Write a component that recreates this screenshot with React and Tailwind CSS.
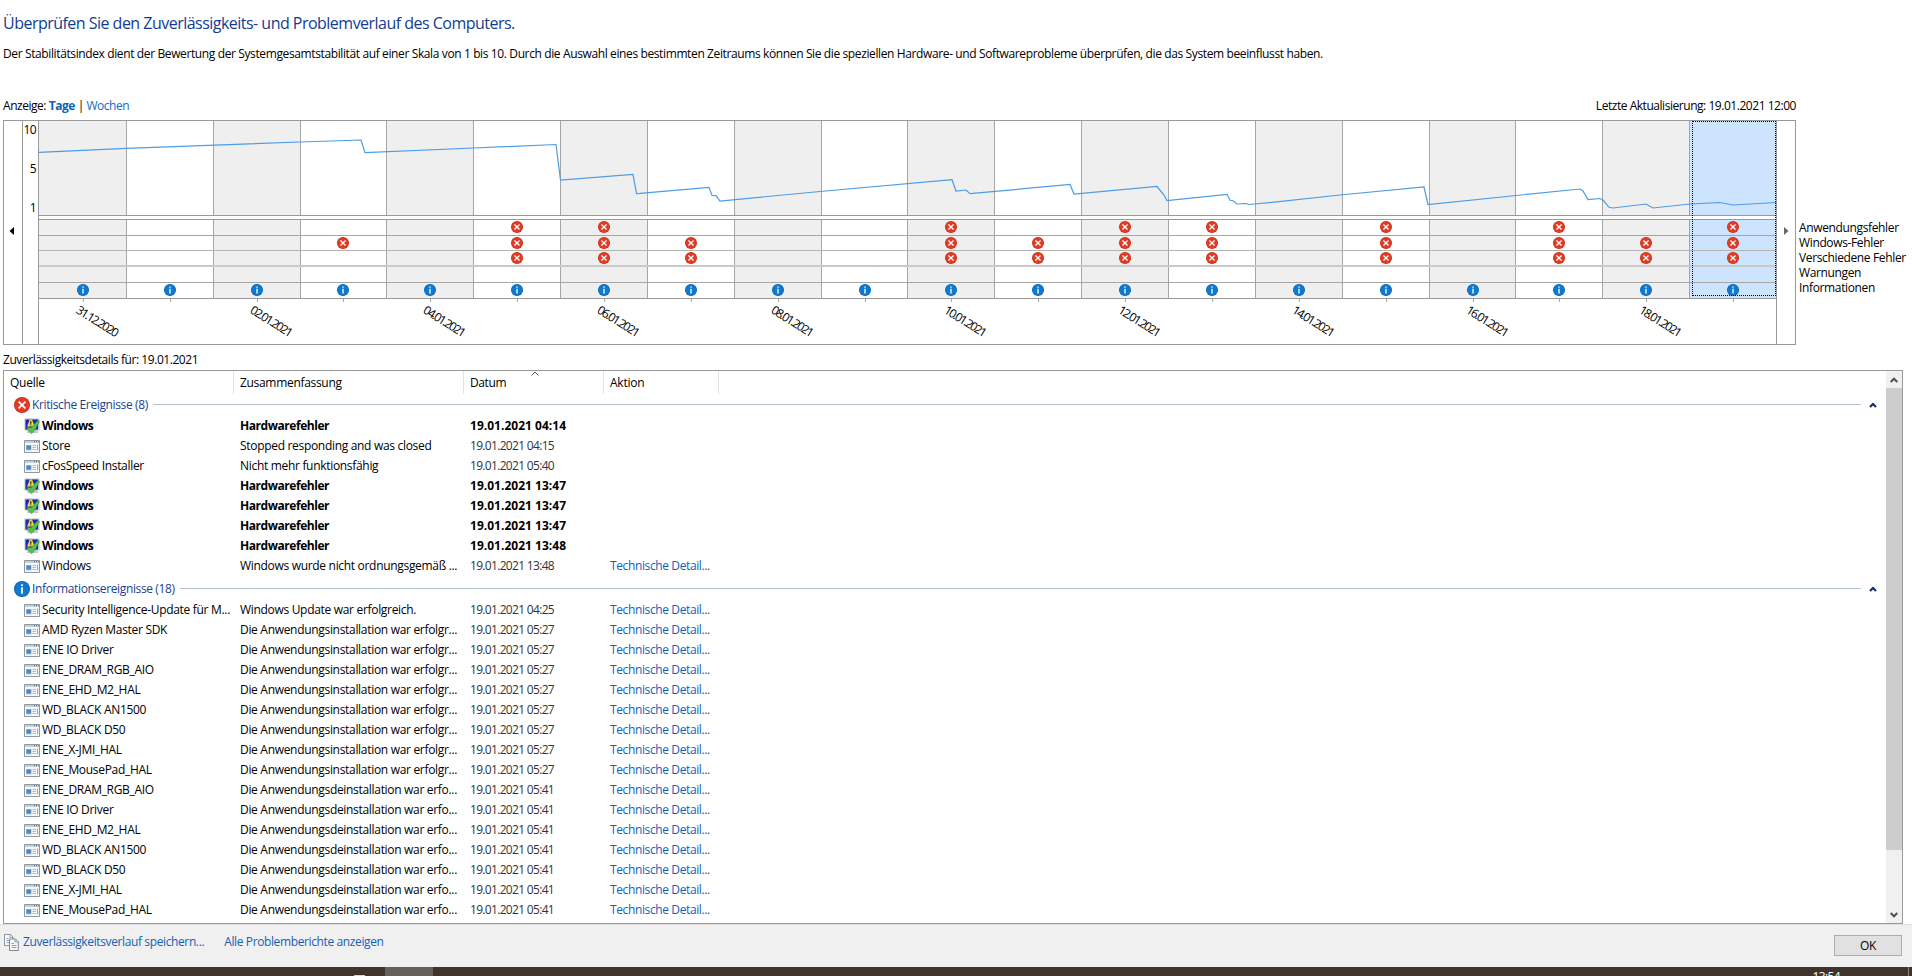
import React from "react";

const columns = Array.from({ length: 20 }, (_, i) => i);
const rowNames = ["Anwendungsfehler", "Windows-Fehler", "Verschiedene Fehler", "Warnungen", "Informationen"];

// day indexes with an event, one list per row of the chart
const events = [
  [5, 6, 10, 12, 13, 15, 17, 19],
  [3, 5, 6, 7, 10, 11, 12, 13, 15, 17, 18, 19],
  [5, 6, 7, 10, 11, 12, 13, 15, 17, 18, 19],
  [],
  columns,
];

const rowStyles = [
  "h-[16px] border-b border-[#a6a6a6]",
  "h-[15px] border-b border-[#b4b4b4]",
  "h-[16px] border-b-2 border-[#c9c9c9]",
  "h-[16px] border-b border-[#a6a6a6]",
  "h-[16px] border-b border-[#999]",
];

const dates = [
  "31.12.2020",
  "02.01.2021",
  "04.01.2021",
  "06.01.2021",
  "08.01.2021",
  "10.01.2021",
  "12.01.2021",
  "14.01.2021",
  "16.01.2021",
  "18.01.2021",
];

const critical = [
  ["Windows", "Hardwarefehler", "04:14", true],
  ["Store", "Stopped responding and was closed", "04:15"],
  ["cFosSpeed Installer", "Nicht mehr funktionsfähig", "05:40"],
  ["Windows", "Hardwarefehler", "13:47", true],
  ["Windows", "Hardwarefehler", "13:47", true],
  ["Windows", "Hardwarefehler", "13:47", true],
  ["Windows", "Hardwarefehler", "13:48", true],
  ["Windows", "Windows wurde nicht ordnungsgemäß ...", "13:48", false, true],
];

const installed = "Die Anwendungsinstallation war erfolgr...";
const removed = "Die Anwendungsdeinstallation war erfo...";

const infos = [
  ["Security Intelligence-Update für M...", "Windows Update war erfolgreich.", "04:25"],
  ["AMD Ryzen Master SDK", installed, "05:27"],
  ["ENE IO Driver", installed, "05:27"],
  ["ENE_DRAM_RGB_AIO", installed, "05:27"],
  ["ENE_EHD_M2_HAL", installed, "05:27"],
  ["WD_BLACK AN1500", installed, "05:27"],
  ["WD_BLACK D50", installed, "05:27"],
  ["ENE_X-JMI_HAL", installed, "05:27"],
  ["ENE_MousePad_HAL", installed, "05:27"],
  ["ENE_DRAM_RGB_AIO", removed, "05:41"],
  ["ENE IO Driver", removed, "05:41"],
  ["ENE_EHD_M2_HAL", removed, "05:41"],
  ["WD_BLACK AN1500", removed, "05:41"],
  ["WD_BLACK D50", removed, "05:41"],
  ["ENE_X-JMI_HAL", removed, "05:41"],
  ["ENE_MousePad_HAL", removed, "05:41"],
].map(([a, b, c]) => [a, b, c, false, true]);

const ErrorIcon = ({ className }) => (
  <svg viewBox="0 0 16 16" className={className}>
    <circle cx="8" cy="8" r="8" fill="#c9301a" />
    <circle cx="8" cy="8" r="7.2" fill="#e03b24" />
    <path d="M4.600 4.600l6.800 6.800M11.400 4.600l-6.800 6.800" stroke="#fff" strokeWidth="1.7" />
  </svg>
);

const InfoIcon = ({ className }) => (
  <svg viewBox="0 0 16 16" className={className}>
    <circle cx="8" cy="8" r="8" fill="#0b63ae" />
    <circle cx="8" cy="8" r="7.2" fill="#0f78d0" />
    <path d="M8 3.200v1.900M8 6.300v6.500" stroke="#fff" strokeWidth="1.8" />
  </svg>
);

const MonitorIcon = () => (
  <svg viewBox="0 0 16 16" className="w-4 h-4 shrink-0">
    <path d="M4 12h9l1.500 3H3z" fill="#c3c8cf" />
    <path d="M0.500 0.500h15v12h-15z" fill="#b7c1cf" />
    <path d="M1.500 1.500h12.500v10H1.500z" fill="#1a2bb0" />
    <path d="M6.800 1.200c1.400 0 1.800 1 1.900 2.300L11 8.500H3l2-5c.1-1.300.6-2.300 1.800-2.300z" fill="#efd93a" />
    <path d="M6.800 3.200v2.600M6.800 6.600v1" stroke="#222" strokeWidth="1.200" />
    <path d="M3.500 9.200l3.700.6 6.600-7.300 1.700 1-4.300 8L7.500 15.800 3.200 11.500z" fill="#5cbf4c" stroke="#2f8f2c" strokeWidth="0.5" />
  </svg>
);

const AppIcon = () => (
  <svg viewBox="0 0 16 13" className="w-4 h-[13px] shrink-0">
    <path d="M0.500 0.500h15v12h-15z" fill="#f5f7f9" stroke="#8f979f" />
    <path d="M1 1h14v2H1z" fill="#c5d0d9" />
    <path d="M10 1.700h1M12 1.700h1M14 1.700h.8" stroke="#4a5864" strokeWidth="0.9" />
    <path d="M2 5h5.500v5.500H2z" fill="#a9c6df" />
    <path d="M2.500 5.500h4.500v4H2.500z" fill="#5286b6" />
    <path d="M8.500 5.500h3.500M8.500 7.500h3.500M8.500 9.500h3.500" stroke="#9aa9b6" strokeWidth="0.8" />
    <path d="M13.600 4.500v6" stroke="#6da0cf" strokeWidth="0.9" />
  </svg>
);

const CopyIcon = () => (
  <svg viewBox="0 0 15 17" className="w-[15px] h-[17px] shrink-0">
    <path d="M.5.5h6l2.500 2.500v8.500H.5z" fill="#f7f8f9" stroke="#8b959e" />
    <path d="M6 .5v3h3M2.500 4.500h2M2.500 6.500h3M2.500 8.500h3" fill="none" stroke="#93a3b3" />
    <path d="M5.500 5h6l2.800 2.800v8.700H5.500z" fill="#f7f8f9" stroke="#7d8992" />
    <path d="M11 5v3h3M7.500 9.500h2.500M7.500 11.500h5M7.500 13.500h5" fill="none" stroke="#7b9fc4" />
  </svg>
);

const dayColor = (i) => {
  if (i === 19) return "bg-[#cce4fd] border-l";
  if (i === 0) return "bg-[#efefef]";
  return i % 2 ? "bg-white border-l" : "bg-[#efefef] border-l";
};

const Chart = () => (
  <div className="flex w-[1793px] h-[225px] border border-[#999]">
    <div className="w-[19px] border-r border-[#999] flex items-center justify-center pb-[3px] pr-[3px]">
      <svg viewBox="0 0 5 8" className="w-[5px] h-2">
        <path d="M5 0v8L0.500 4z" fill="#000" />
      </svg>
    </div>
    <div className="w-[16px] border-r border-[#999] text-right pr-[2px] text-[12px] leading-[16px] tracking-[-0.6px]">
      <div className="pt-[1px]">10</div>
      <div className="pt-[23px]">5</div>
      <div className="pt-[23px]">1</div>
    </div>
    <div className="relative w-[1738px] border-r border-[#999]">
      <div className="grid grid-cols-20 h-[95px] border-b border-[#999]">
        {columns.map((i) => (
          <div key={i} className={`${dayColor(i)} border-[#a6a6a6]`} />
        ))}
      </div>
      <div className="h-[3px]" />
      <div className="border-t border-[#999]">
        {events.map((list, row) => (
          <div key={row} className={`grid grid-cols-20 ${rowStyles[row]}`}>
            {columns.map((i) => (
              <div key={i} className={`flex items-start justify-center pt-px ${i ? "" : "pl-px"} ${dayColor(i)} border-[#a6a6a6]`}>
                {list.includes(i) &&
                  (row === 4 ? (
                    <InfoIcon className="w-[12px] h-[12px] shrink-0" />
                  ) : (
                    <ErrorIcon className="w-[12px] h-[12px] shrink-0" />
                  ))}
              </div>
            ))}
          </div>
        ))}
      </div>
      <div className="grid grid-cols-20 h-[3px]">
        {columns.map((i) => (
          <div key={i} className="flex justify-center pl-[2px]">
            <div className="w-px h-[3px] bg-[#a6a6a6]" />
          </div>
        ))}
      </div>
      <div className="grid grid-cols-10 pt-[1px]">
        {dates.map((d) => (
          <div key={d} className="pl-[42px]">
            <div className="w-[50px] origin-top-left rotate-[32deg] text-[12px] leading-[14px] tracking-[-1.500px]">{d}</div>
          </div>
        ))}
      </div>

      <svg viewBox="39 121 1737 95" className="absolute left-0 top-0 w-[1737px] h-[95px]">
        <polyline
          fill="none"
          stroke="#4c9ce6"
          strokeWidth="1.2"
          points="39,152.300 126,148.300 300,142 361,140 365,152.700 474,148 556,144.500 560.500,180 633,174.300 636.500,193.500 640,193.300 709,187.300 712,195.500 716,195.700 720,201 820,191.500 952,179.700 956,191 966,190 970,193.700 1070,184.500 1074,194 1157,186.500 1164,195 1167,200.500 1227,194.300 1230,200.300 1233,200.700 1237,204 1246,203.500 1249,204.500 1272,202.300 1340,195 1424,187 1428,204.500 1580,189 1583,191 1588,199.500 1600,198.500 1603,200 1609,207.300 1613,208 1646,204 1653,208 1690,204 1720,202.500 1733,205 1776,202.500"
        />
      </svg>
      <div className="absolute right-0 top-0 w-[84px] h-[175px] border border-dotted border-black" />
    </div>
    <div className="flex-1 flex items-center justify-center pb-[3px]">
      <svg viewBox="0 0 5 8" className="w-[5px] h-2">
        <path d="M0 0v8l4.500-4z" fill="#666" />
      </svg>
    </div>
  </div>
);

const Group = ({ icon, label }) => (
  <div className="flex items-center h-[21px] mb-px pl-[10px]">
    {icon}
    <span className="pl-[2px] pr-[5px] tracking-[-0.37px] text-[#1b3f8f]">{label}</span>
    <div className="flex-1 h-px bg-[#b4bfd3]" />
    <svg viewBox="0 0 8 6" className="w-2 h-[6px] ml-[8px] mr-[9px]">
      <path d="M1 5l3-3 3 3" fill="none" stroke="#10316b" strokeWidth="2.200" />
    </svg>
  </div>
);

const Row = ({ row: [source, summary, time, bold, action] }) => (
  <div className={`flex items-center h-5 ${bold ? "font-bold tracking-[-0.45px]" : "tracking-[-0.31px]"}`}>
    <div className="w-[236px] pl-5 flex items-center gap-[2px]">
      {bold ? <MonitorIcon /> : <AppIcon />}
      <span>{source}</span>
    </div>
    <div className="w-[230px]">{summary}</div>
    <div className={`w-[140px] ${bold ? "tracking-[0.02px]" : "tracking-[-0.68px] text-[#333]"}`}>19.01.2021 {time}</div>
    {action && <a className="tracking-[-0.38px] text-[#1560b4]">Technische Detail...</a>}
  </div>
);

const App = () => {
  return (
    <div className="w-[1912px] h-[976px] overflow-hidden bg-white font-['Open_Sans','Noto_Sans',sans-serif] text-[12px] leading-[16px] tracking-[-0.25px] text-black whitespace-nowrap">
      <div className="h-[924px] pl-[3px]">
        <h1 className="pt-[11px] text-[16px] leading-[24px] tracking-[-0.52px] text-[#123d91]">
          Überprüfen Sie den Zuverlässigkeits- und Problemverlauf des Computers.
        </h1>
        <p className="pt-[11px] tracking-[-0.38px]">
          Der Stabilitätsindex dient der Bewertung der Systemgesamtstabilität auf einer Skala von 1 bis 10. Durch die Auswahl eines bestimmten
          Zeitraums können Sie die speziellen Hardware- und Softwareprobleme überprüfen, die das System beeinflusst haben.
        </p>
        <div className="flex justify-between w-[1793px] pt-[36px] tracking-[-0.46px]">
          <div>
            Anzeige: <b className="text-[#0a63bc]">Tage</b> | <a className="text-[#1468c4]">Wochen</a>
          </div>
          <div>Letzte Aktualisierung: 19.01.2021 12:00</div>
        </div>
        <div className="flex pt-[6px]">
          <Chart />
          <div className="pt-[100px] pl-[3px] leading-[15px] tracking-[-0.36px]">
            {rowNames.map((n) => (
              <div key={n}>{n}</div>
            ))}
          </div>
        </div>

        <div className="pt-[7px] tracking-[-0.44px]">Zuverlässigkeitsdetails für: 19.01.2021</div>
        <div className="mt-[2px] flex w-[1900px] h-[554px] border border-[#999]">
          <div className="flex-1">
            <div className="flex h-[23px] leading-[24px]">
              <div className="w-[230px] pl-[6px] border-r border-[#e2e2e2]">Quelle</div>
              <div className="w-[230px] pl-[6px] border-r border-[#e2e2e2] tracking-[-0.31px]">Zusammenfassung</div>
              <div className="relative w-[140px] pl-[6px] border-r border-[#e2e2e2] tracking-[-0.4px]">
                Datum
                <svg viewBox="0 0 8 5" className="absolute left-[67px] top-0 w-2 h-[5px]">
                  <path d="M0.500 4.500l3.500-3.500 3.500 3.500" fill="none" stroke="#555" />
                </svg>
              </div>
              <div className="w-[115px] pl-[6px] border-r border-[#e2e2e2]">Aktion</div>
            </div>
            <Group icon={<ErrorIcon className="w-4 h-4" />} label="Kritische Ereignisse (8)" />
            {critical.map((r, i) => (
              <Row key={i} row={r} />
            ))}
            <div className="h-[2px]" />
            <Group icon={<InfoIcon className="w-4 h-4" />} label="Informationsereignisse (18)" />
            {infos.map((r, i) => (
              <Row key={i} row={r} />
            ))}
          </div>
          <div className="w-4 bg-[#f0f0f0] flex flex-col items-center justify-between">
            <svg viewBox="0 0 8 6" className="w-2 h-[6px] mt-[6px]">
              <path d="M0.700 5l3.300-3.300 3.300 3.300" fill="none" stroke="#505050" strokeWidth="2" />
            </svg>
            <div className="w-full h-[462px] mt-[5px] mb-auto bg-[#cdcdcd]" />
            <svg viewBox="0 0 8 6" className="w-2 h-[6px] mb-[5px]">
              <path d="M0.700 1l3.300 3.300 3.300-3.300" fill="none" stroke="#505050" strokeWidth="2" />
            </svg>
          </div>
        </div>
      </div>

      <div className="flex justify-between h-[43px] pl-[4px] pr-[10px] bg-[#f0f0f0] border-t border-[#dfdfdf] text-[#1560b4]">
        <div className="flex items-start pt-[9px] tracking-[-0.38px]">
          <CopyIcon />
          <a className="pl-1">Zuverlässigkeitsverlauf speichern...</a>
          <a className="pl-5">Alle Problemberichte anzeigen</a>
        </div>
        <button className="mt-[10px] w-[68px] h-[21px] bg-[#e1e1e1] border border-[#adadad] text-black leading-[18px]">OK</button>
      </div>
      <div className="flex h-[9px] bg-[#3e342b] overflow-hidden">
        <div className="w-[385px] pl-[354px] pt-[8px]">
          <div className="w-[11px] h-[1px] bg-[#d8d4d0]" />
        </div>
        <div className="w-[48px] bg-[#67605a]" />
        <div className="flex-1 text-right pr-[68px] pt-[2px] tracking-[-0.6px] text-white">13:54</div>
        <div className="w-px mr-[3px] bg-[#8a847e]" />
      </div>
    </div>
  );
};

export default App;
